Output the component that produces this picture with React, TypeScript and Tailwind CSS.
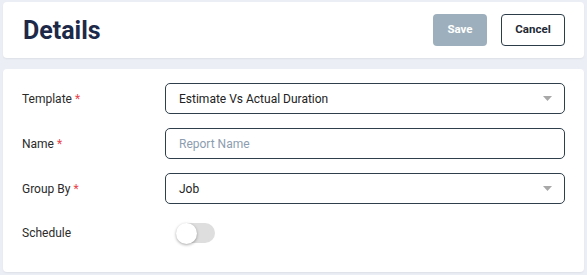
import React, { useState } from "react";

const Field: React.FC<{ label: string; required?: boolean; children: React.ReactNode }> = ({ label, required, children }) => {
    return (
        <div className="flex items-center">
            <div className="w-[143px] text-[12px] text-[#2b2b2b]">
                {label}
                {required ? <span className="text-[#e8434b] ml-[3px]">*</span> : null}
            </div>
            <div className="flex-grow">{children}</div>
        </div>
    );
};

const Caret = () => (
    <svg className="w-[9px] h-[5px]" viewBox="0 0 9 5">
        <path d="M0 0h9L4.5 5z" fill="#a8a8a8" />
    </svg>
);

export default function App() {
    const [schedule, setSchedule] = useState(false);

    return (
        <div className="w-[587px] h-[275px] bg-[#ebeef5] px-[3px] pt-[2px] font-['Roboto',sans-serif]">
            {/* Header */}
            <div className="h-[56px] bg-white rounded-[4px] shadow-[0_1px_2px_rgba(0,0,0,0.06)] flex items-center pl-[20px] pr-[19px] w-[581px]">
                <h1 className="text-[25px] font-bold text-[#1c2948] flex-grow leading-none">Details</h1>
                <button className="w-[54px] h-[32px] rounded-[4px] bg-[#9dafbc] text-white text-[11.5px] font-bold">Save</button>
                <button className="ml-[14px] w-[64px] h-[32px] rounded-[4px] border border-[#2c3d49] text-[#1f2a36] text-[11.5px] font-bold">Cancel</button>
            </div>

            {/* Form */}
            <div className="mt-[11px] h-[203px] bg-white rounded-[4px] shadow-[0_1px_2px_rgba(0,0,0,0.06)] w-[581px] pl-[19px] pr-[19px] pt-[14px] flex flex-col gap-[14px]">
                <Field label="Template" required>
                    <div className="h-[31px] border border-[#2f3f4b] rounded-[5px] flex items-center pl-[13px] pr-[12px]">
                        <span className="flex-grow text-[12px] text-[#222]">Estimate Vs Actual Duration</span>
                        <Caret />
                    </div>
                </Field>
                <Field label="Name" required>
                    <input
                        className="w-full h-[31px] border border-[#2f3f4b] rounded-[5px] pl-[13px] text-[12px] outline-none placeholder:text-[#8d9db0]"
                        placeholder="Report Name"
                    />
                </Field>
                <Field label="Group By" required>
                    <div className="h-[31px] border border-[#2f3f4b] rounded-[5px] flex items-center pl-[13px] pr-[12px]">
                        <span className="flex-grow text-[12px] text-[#222]">Job</span>
                        <Caret />
                    </div>
                </Field>
                <div className="mt-[5px]">
                    <Field label="Schedule">
                        <button
                            onClick={() => setSchedule(!schedule)}
                            className="relative ml-[11px] w-[39px] h-[20px] flex items-center"
                        >
                            <span className="absolute left-[3px] right-0 h-[20px] rounded-full bg-[#dedede]" />
                            <span className="absolute left-0 w-[21px] h-[21px] rounded-full bg-white shadow-[0_1px_3px_rgba(0,0,0,0.35)]" />
                        </button>
                    </Field>
                </div>
            </div>
        </div>
    );
}
